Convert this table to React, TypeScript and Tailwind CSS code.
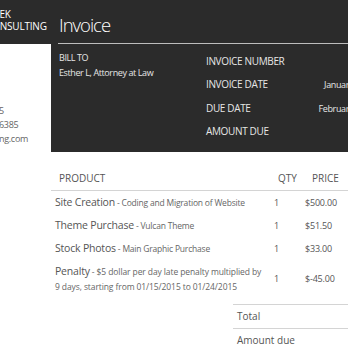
const items = [
  { name: "Site Creation", desc: "Coding and Migration of Website", qty: 1, price: "$500.00" },
  { name: "Theme Purchase", desc: "Vulcan Theme", qty: 1, price: "$51.50" },
  { name: "Stock Photos", desc: "Main Graphic Purchase", qty: 1, price: "$33.00" },
];

export default function App() {
  return (
    <div className="w-[348px] h-[348px] overflow-hidden bg-white font-['Open_Sans',sans-serif] flex">
      {/* sidebar, cut off on the left */}
      <div className="w-[51px] shrink-0 overflow-hidden">
        <div className="h-[44px] bg-[#2b2b2b] pt-[8px] text-white text-[10px] leading-[12px] tracking-[-0.2px] whitespace-nowrap">
          <div className="-ml-[13px]">GEEK</div>
          <div className="-ml-[14px]">CONSULTING</div>
        </div>
        <div className="pt-[60px] text-[9px] leading-[14px] tracking-[-0.3px] text-[#666] whitespace-nowrap">
          <div className="-ml-[1px]">5</div>
          <div className="-ml-[1px]">6385</div>
          <div className="-ml-[1px]">ng.com</div>
        </div>
      </div>

      <div className="w-[400px] shrink-0">
        {/* dark top */}
        <div className="bg-[#2b2b2b] h-[152px]">
          <div className="h-[44px] ml-[7px] border-b border-[#bdbdbd] pl-[1px] pt-[16px]">
            <h1 className="text-white text-[18.5px] leading-[18px] tracking-[-1px] font-light">Invoice</h1>
          </div>
          <div className="flex pl-[8px] text-[#e6e6e6]">
            <div className="w-[147px] pt-[6px] text-[9px] leading-[15px] tracking-[-0.4px]">
              <div>BILL TO</div>
              <div>Esther L, Attorney at Law</div>
            </div>
            <div className="pt-[6px] text-[10px] leading-[23.3px] tracking-[-0.35px]">
              <div className="flex">
                <span className="w-[100px]">INVOICE NUMBER</span>
                <span className="w-[82px] text-right text-[9px]"></span>
              </div>
              <div className="flex">
                <span className="w-[100px]">INVOICE DATE</span>
                <span className="w-[82px] text-right text-[9px]">January 15, 2015</span>
              </div>
              <div className="flex">
                <span className="w-[100px]">DUE DATE</span>
                <span className="w-[82px] text-right text-[9px]">February 15, 2015</span>
              </div>
              <div className="flex">
                <span className="w-[100px]">AMOUNT DUE</span>
                <span className="w-[82px] text-right text-[9px]">$539.50</span>
              </div>
            </div>
          </div>
        </div>

        {/* line items */}
        <div className="text-[#555]">
          <div className="flex border-b border-[#d4d4d4] pt-[18px] pb-[4px] text-[10px] leading-[16px]">
            <div className="w-[221px] pl-[8px]">PRODUCT</div>
            <div className="w-[31px] pl-[6px]">QTY</div>
            <div className="w-[60px] pl-[9px]">PRICE</div>
            <div className="pl-[9px]">TOTAL</div>
          </div>
          {items.map((it) => (
            <div key={it.name} className="flex h-[23px] items-center">
              <div className="w-[221px] pl-[4px] text-[10.5px] tracking-[-0.2px]">
                {it.name}
                <span className="text-[8.5px] tracking-[-0.2px] text-[#666]"> - {it.desc}</span>
              </div>
              <div className="w-[31px] pl-[2px] text-[9px]">{it.qty}</div>
              <div className="w-[60px] pl-[2px] text-[9px] tracking-[-0.2px]">{it.price}</div>
            </div>
          ))}
          <div className="flex items-center pt-[4px] pb-[4px]">
            <div className="w-[221px] pl-[4px] text-[10.5px] leading-[14px] tracking-[-0.2px]">
              Penalty
              <span className="text-[8.5px] tracking-[-0.1px] text-[#666]">
                {" "}- $5 dollar per day late penalty multiplied by
                <br />9 days, starting from 01/15/2015 to 01/24/2015
              </span>
            </div>
            <div className="w-[31px] pl-[2px] text-[9px]">1</div>
            <div className="w-[60px] pl-[2px] text-[9px] tracking-[-0.2px]">$-45.00</div>
          </div>

          <div className="ml-[182px] mt-[6px] text-[10px]">
            <div className="border-t border-[#d4d4d4] h-[24px] pl-[4px] leading-[22px]">Total</div>
            <div className="border-t border-[#d4d4d4] h-[24px] pl-[4px] leading-[22px]">Amount due</div>
          </div>
        </div>
      </div>
    </div>
  );
}
